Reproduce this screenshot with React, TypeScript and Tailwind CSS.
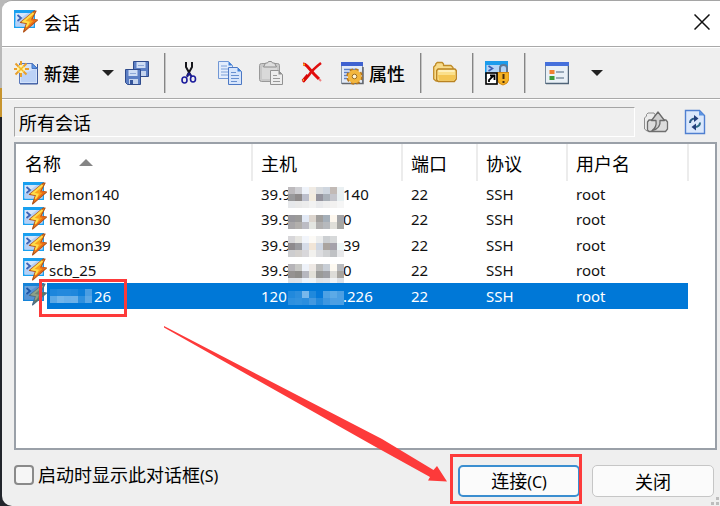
import React, { useState } from 'react';

interface Session {
  id: number;
  name: string;
  hostStart: string;
  hostEnd: string;
  port: string;
  protocol: string;
  user: string;
  mask: string[][];
  maskTop: string;
}

const sessions: Session[] = [
  {
    id: 1, name: 'lemon140', hostStart: '39.9', hostEnd: '140', port: '22', protocol: 'SSH', user: 'root', maskTop: 'top-1.5',
    mask: [
      ['#bdbabd', '#cfcfd3', '#eff3fa', '#f0ebe4', '#d9dcdf', '#cfd6df', '#c2bab6', '#eaf0f2'],
      ['#99999b', '#8f8b8b', '#bcbfcc', '#f3ecdf', '#94939d', '#a9b0b8', '#c4c5cc', '#e7eff1'],
      ['#e6e8eb', '#e9e9e9', '#ececec', '#f2f2f2', '#e9eaec', '#efefef', '#f2f1f0', '#f6f6f6'],
    ],
  },
  {
    id: 2, name: 'lemon30', hostStart: '39.9', hostEnd: '0', port: '22', protocol: 'SSH', user: 'root', maskTop: 'top-2',
    mask: [
      ['#98979c', '#9b9a99', '#e2e9f5', '#dcd5ce', '#a19f9d', '#a5afb9', '#fdf7ee', '#a4a5a8'],
      ['#a8a6a8', '#b2afac', '#bcbcc4', '#e3e5e1', '#b1b0b0', '#b6b9bd', '#e0dfd9', '#a6a6a3'],
    ],
  },
  {
    id: 3, name: 'lemon39', hostStart: '39.9', hostEnd: '39', port: '22', protocol: 'SSH', user: 'root', maskTop: 'top-1',
    mask: [
      ['#d7d6d9', '#e6e5e1', '#f2f5fb', '#fcfaf6', '#eceded', '#cccfd2', '#d7d9da', '#ffffff'],
      ['#8e8a8d', '#9b9b9f', '#d6dce8', '#f1e5d7', '#cfd7e3', '#aaa49f', '#a5a2ab', '#eef7f8'],
      ['#cdcdcf', '#d3d0cd', '#d8d7da', '#f2f1ee', '#dcdde0', '#cfd1d3', '#bfc1c4', '#e7e8ea'],
    ],
  },
  {
    id: 4, name: 'scb_25', hostStart: '39.9', hostEnd: '0', port: '22', protocol: 'SSH', user: 'root', maskTop: 'top-1.5',
    mask: [
      ['#b6b4b8', '#c8c8c5', '#eef2f9', '#eee9e5', '#bcbcbb', '#c8ced6', '#fdf9f1', '#b9bbbf'],
      ['#959291', '#8f8d8a', '#b6b7bf', '#e2e0d8', '#9a9a98', '#9e9fa4', '#dddcd8', '#a8a5a0'],
      ['#dfe2e6', '#e0e3e8', '#edf3fb', '#f0f3f5', '#e0e2e5', '#e1e4e9', '#f1f3f5', '#dde1e7'],
    ],
  },
  {
    id: 5, name: '26', hostStart: '120', hostEnd: '.226', port: '22', protocol: 'SSH', user: 'root', maskTop: 'top-2',
    mask: [
      ['#2189dc', '#2c8edd', '#77b8ec', '#2089dc', '#0679d9', '#4ea1e4', '#5caae7', '#4b9fe3'],
      ['#2d90df', '#3192df', '#2b8ede', '#4298e0', '#2389dc', '#3e97e1', '#4d9fe3', '#4b9fe4'],
    ],
  },
];

const nameMask = [
  ['#1c86dc', '#2289dd', '#2289dd', '#1f87dc', '#0f7fd9', '#4a9de2'],
  ['#5aa8e6', '#71b5ea', '#69b0e9', '#6cb1e9', '#2e90df', '#5ba7e5'],
];

const Mosaic = ({ cells }: { cells: string[][] }) => (
  <svg width={cells[0].length * 7} height={cells.length * 7} shapeRendering="crispEdges" aria-hidden="true">
    {cells.map((line, y) =>
      line.map((color, x) => <rect key={`${x}-${y}`} x={x * 7} y={y * 7} width="7" height="7" fill={color} />)
    )}
  </svg>
);

const SessionIcon = ({ selected = false }: { selected?: boolean }) => (
  <svg className="shrink-0" width="24" height="24" viewBox="0 0 24 24" aria-hidden="true">
    <rect x="0" y="0" width="21" height="18" fill={selected ? '#1583d8' : '#19a0f0'} />
    <rect x="1.500" y="3" width="18" height="13.500" fill={selected ? '#6ba3dc' : '#d5e6fb'} />
    <path d="M1.500 16.500V12L14 3h5.500v13.500z" fill={selected ? '#5592d4' : '#b5d0f5'} />
    <path d="M3.500 5l3.500 3-3.500 3" fill="none" stroke={selected ? '#1d55a8' : '#3d63b8'} strokeWidth="1.800" />
    <path d="M20.500 1L6.500 12.500l6 1L9.500 22 23.500 10l-5.500-1L22 1z" fill={selected ? '#6d8273' : '#f9a21c'} stroke={selected ? '#4d6f88' : '#b5541a'} strokeWidth="1.200" strokeLinejoin="round" />
    <path d="M19.500 3L9.500 11.500l5 1L12.500 17" fill="none" stroke={selected ? '#8fa287' : '#ffdc4a'} strokeWidth="2" />
    <path d="M12 19l9-8.500-4-1" fill="none" stroke={selected ? '#5f7560' : '#ea6a18'} strokeWidth="1.500" />
  </svg>
);

const NewIcon = () => (
  <svg width="24" height="24" viewBox="0 0 24 24" aria-hidden="true">
    <path d="M5.500 2.500H18l5.500 5v15h-18z" fill="#d3e2fa" stroke="#5a79bd" />
    <path d="M7 13l15-5v13H7z" fill="#bcd2f6" />
    <path d="M23.500 3v20H6" fill="none" stroke="#3d5a9c" />
    <path d="M18 2.500v5h5.500z" fill="#5b97e8" stroke="#4672bd" />
    <circle cx="7" cy="8" r="4" fill="#fff3a8" />
    <path d="M7 0v4M7 12v4M-1 8h4M11 8h4M1.500 2.500l3 3M12.500 2.500l-3 3M1.500 13.500l3-3M12.500 13.500l-3-3" stroke="#e9a02c" strokeWidth="2" />
    <path d="M4.500 5.500l5 5M9.500 5.500l-5 5" stroke="#f5b822" strokeWidth="1.500" />
  </svg>
);

const Floppy = () => (
  <>
    <path d="M.5.5h15v15h-13l-2-2z" fill="#5c7fc4" stroke="#2f4b8c" />
    <rect x="3.500" y="1" width="9" height="6" fill="#cfdef5" />
    <path d="M5 4.500h6" stroke="#8fa9d8" />
    <rect x="4" y="10" width="9" height="5" fill="#c6d5ee" />
    <rect x="5" y="11" width="3" height="4" fill="#35559b" />
  </>
);

const SaveAllIcon = () => (
  <svg width="24" height="24" viewBox="0 0 24 24" aria-hidden="true">
    <g transform="translate(8)"><Floppy /></g>
    <g transform="translate(0 8)"><Floppy /></g>
  </svg>
);

const CutIcon = () => (
  <svg width="24" height="24" viewBox="0 0 24 24" fill="none" aria-hidden="true">
    <path d="M9 1v5l5 9M15 1v5l-5 9" stroke="#17171c" strokeWidth="2" />
    <path d="M12 12l-2 4M12 12l3 4" stroke="#1c1c8c" strokeWidth="2" />
    <ellipse cx="7.500" cy="19" rx="2.500" ry="3" stroke="#1c1c9c" strokeWidth="1.600" />
    <ellipse cx="16" cy="18" rx="2.500" ry="3" stroke="#1c1c9c" strokeWidth="1.600" />
  </svg>
);

const CopyIcon = () => (
  <svg width="24" height="24" viewBox="0 0 24 24" aria-hidden="true">
    <path d="M.5.500h10l4 4v13H.5z" fill="#e3edfc" stroke="#7197d5" />
    <path d="M10.500.500v4h4z" fill="#3f80d8" />
    <path d="M3 5h6M3 8h8M3 11h8M3 14h8" stroke="#7ca0d8" />
    <path d="M10.500 6.500h9l4 4v13h-13z" fill="#d7e5fb" stroke="#4c78c4" />
    <path d="M19.500 6.500v4h4z" fill="#3f80d8" />
    <path d="M13 11.500h5M13 14.500h8M13 17.500h8M13 20.500h6" stroke="#6890d0" />
  </svg>
);

const PasteIcon = () => (
  <svg width="24" height="24" viewBox="0 0 24 24" aria-hidden="true">
    <rect x=".5" y="2.500" width="20" height="18" rx="2" fill="#c8c8c8" stroke="#999" />
    <rect x="3" y="6" width="15" height="12" fill="#d9d9d9" />
    <path d="M4.500 6l2-4h2l1-1.500h3l1 1.500h2l2 4z" fill="#dedede" stroke="#8c8c8c" />
    <path d="M11.500 9.500h8l4 4v10h-12z" fill="#ededed" stroke="#929292" />
    <path d="M19.500 9.500v4h4z" fill="#909090" />
    <path d="M14 14.500h4M14 17.500h7M14 20.500h7" stroke="#999" />
  </svg>
);

const DeleteIcon = () => (
  <svg width="24" height="24" viewBox="0 0 24 24" fill="none" aria-hidden="true">
    <path d="M3 3q2 0 4 2l7 8 5 5" stroke="#e30b0b" strokeWidth="3" />
    <path d="M21 2Q12 9 9 14l-6 7" stroke="#e01010" strokeWidth="2.500" />
    <path d="M3 20l5-6" stroke="#d80808" strokeWidth="3.500" />
    <path d="M19 18l2 2" stroke="#f08080" strokeWidth="2" />
    <path d="M3 3.500h2M3 19h1" stroke="#f6a51c" strokeWidth="2" />
  </svg>
);

const PropertiesIcon = () => (
  <svg width="24" height="24" viewBox="0 0 24 24" aria-hidden="true">
    <rect x=".5" y="1.500" width="21" height="21" fill="#e3ebf8" stroke="#8d99a8" />
    <rect x="0" y="1" width="22" height="4" fill="#3f62d0" />
    <path d="M3 8.500h12M3 11.500h7M3 14.500h4M3 17.500h3" stroke="#5c80c8" strokeWidth="1.500" />
    <path d="M1 22.500h21V6" fill="none" stroke="#63676e" strokeWidth="1.500" />
    <circle cx="13.500" cy="15.500" r="6.500" fill="none" stroke="#b9781c" strokeWidth="3.500" strokeDasharray="3.100 2" />
    <circle cx="13.500" cy="15.500" r="4.500" fill="none" stroke="#f3b63e" strokeWidth="4.500" />
    <circle cx="13.500" cy="15.500" r="2.300" fill="#fff4d5" stroke="#9b6b20" />
  </svg>
);

const FolderIcon = () => (
  <svg width="24" height="24" viewBox="0 0 24 24" aria-hidden="true">
    <path d="M.7 18V6l2-2V3l1.500-1.500h5L10.500 3v1.500H18l2 2V20H3z" fill="#f8dc8c" stroke="#c08c28" strokeWidth="1.300" strokeLinejoin="round" />
    <path d="M3.700 9.500L5 8h17l1.300 1.500V18l-2 2.500h-16L3.700 19z" fill="#fbe08b" stroke="#b98222" strokeWidth="1.300" strokeLinejoin="round" />
    <path d="M5 14h17v4l-1.500 1.500H6z" fill="#f4c654" />
    <path d="M5.500 10h16" stroke="#fff6cc" strokeWidth="1.500" />
  </svg>
);

const ShortcutIcon = () => (
  <svg width="24" height="26" viewBox="0 0 24 26" aria-hidden="true">
    <rect x="0" y="1" width="23" height="18" fill="#1c9cec" />
    <rect x="1.500" y="5" width="20" height="12" fill="#b4d4f6" />
    <path d="M3.500 6l4 2.500-4 2.500" fill="none" stroke="#3b5fb4" strokeWidth="1.600" />
    <path d="M15 14V8q0-3 3.500-3T22 8v6" fill="none" stroke="#607894" strokeWidth="2" />
    <path d="M12 12.500h12V19q-1 5-6 6-5-1-6-6z" fill="#f5b224" stroke="#d18713" />
    <path d="M18.500 14v5M18.500 21v2" stroke="#4b2f0c" strokeWidth="2" />
    <rect x="1" y="13" width="11" height="11" fill="#fff" stroke="#000" strokeWidth="1.600" />
    <path d="M4 22v-2l4-4M5 15.500h4.500V20" fill="none" stroke="#000" strokeWidth="1.800" />
  </svg>
);

const ViewIcon = () => (
  <svg width="24" height="24" viewBox="0 0 24 24" aria-hidden="true">
    <rect x=".5" y="1.500" width="23" height="21" fill="#e9f0f6" stroke="#75899c" />
    <rect x="0" y="1" width="24" height="4" fill="#4470dc" />
    <path d="M1 22.500h22.500V5" fill="none" stroke="#506478" strokeWidth="1.500" />
    <rect x="4.500" y="9" width="5" height="4" fill="#f08030" />
    <rect x="4.500" y="15" width="5" height="4" fill="#3a9a36" />
    <path d="M11 11h8M11 17h8" stroke="#7f91a5" strokeWidth="1.500" />
  </svg>
);

const UpIcon = () => (
  <svg width="26" height="24" viewBox="0 0 26 24" aria-hidden="true">
    <path d="M1.500 19V8l2-2V4.500L5 3h6l1 1.500V6h5l2 2v13H4z" fill="#ececec" stroke="#8d8d8d" strokeLinejoin="round" />
    <path d="M4.500 12L6 10h17l1.500 2v7l-2 2.500H6L4.500 20z" fill="#dcdcdc" stroke="#6f6f6f" strokeWidth="1.300" strokeLinejoin="round" />
    <path d="M9 20.500q5-3 4-10H8.500L15 2l6.500 8.500H17q1 8-8 10z" fill="#cfcfcf" stroke="#6a6a6a" strokeWidth="1.300" strokeLinejoin="round" />
  </svg>
);

const RefreshIcon = () => (
  <svg width="22" height="26" viewBox="0 0 22 26" aria-hidden="true">
    <path d="M1.500 1.500h14l5 5v18h-19z" fill="#dbe8fc" stroke="#4f7fd0" strokeWidth="1.400" />
    <path d="M15 1.500v5h5.500z" fill="#5b93e2" />
    <path d="M6 14q0-4 5-4.500" fill="none" stroke="#2b5a86" strokeWidth="2" />
    <path d="M10 6l4.500 3.500L10 13z" fill="#223f7c" />
    <path d="M16 13.500q0 4-5 4.500" fill="none" stroke="#2b6a86" strokeWidth="2" />
    <path d="M12 14.500L7.500 18l4.500 3.500z" fill="#223f7c" />
  </svg>
);

const Caret = () => (
  <svg width="12" height="6" viewBox="0 0 12 6" aria-hidden="true">
    <path d="M0 0h12L6 6z" fill="#222" />
  </svg>
);

const Separator = () => <span className="ml-[15px] mr-[11px] h-10 w-0.5 border-l border-[#858585] bg-[#c4c4c4]" />;

const Latin = ({ children }: { children: React.ReactNode }) => (
  <span className="font-['Noto_Sans',sans-serif] text-base">{children}</span>
);

export default function App() {
  const [showOnStart, setShowOnStart] = useState(false);
  const [selectedId, setSelectedId] = useState(5);

  return (
    <div className="min-h-screen bg-[linear-gradient(#b9b9b9_88px,#c8952f_88px,#c8952f_117px,#22252b_117px)] pl-0.5 font-['Noto_Sans_CJK_SC',sans-serif] text-lg leading-6 text-black">
      <div className="relative flex min-h-screen flex-col overflow-hidden rounded-l-[10px] border-t border-[#a5a5a5] bg-[#efefef]">
        <header className="flex h-[45px] items-center bg-white pb-1 pl-3 pr-2.5">
          <SessionIcon />
          <h1 className="ml-1.5 flex-1 font-normal">会话</h1>
          <button aria-label="关闭窗口">
            <svg width="16" height="16" viewBox="0 0 16 16" aria-hidden="true">
              <path d="M.5.500l15 15M15.500.500l-15 15" stroke="#111" strokeWidth="1.500" />
            </svg>
          </button>
        </header>

        <div className="flex h-[53px] items-center border-y border-[#a9a9a9] pl-3 font-medium shadow-[inset_0_1px_0_#fff,0_1px_0_#fff]">
          <button className="flex items-center gap-1.5"><NewIcon />新建</button>
          <button className="ml-[22px] mr-[11px]" aria-label="新建选项"><Caret /></button>
          <button aria-label="全部保存"><SaveAllIcon /></button>
          <Separator />
          <div className="flex items-center gap-[17px]">
            <button aria-label="剪切"><CutIcon /></button>
            <button aria-label="复制"><CopyIcon /></button>
            <button aria-label="粘贴"><PasteIcon /></button>
            <button aria-label="删除"><DeleteIcon /></button>
            <button className="flex items-center gap-1"><PropertiesIcon />属性</button>
          </div>
          <Separator />
          <button aria-label="新建文件夹"><FolderIcon /></button>
          <Separator />
          <button aria-label="创建快捷方式"><ShortcutIcon /></button>
          <Separator />
          <button className="ml-2" aria-label="查看"><ViewIcon /></button>
          <button className="ml-[22px]" aria-label="查看选项"><Caret /></button>
        </div>

        <div className="mt-2 flex h-[30px] items-center pl-3 pr-3.5">
          <div className="flex h-[30px] flex-1 items-center border border-b-white border-l-[#a5a5a5] border-r-white border-t-[#a5a5a5] pl-1">所有会话</div>
          <button className="ml-2" aria-label="向上"><UpIcon /></button>
          <button className="ml-[15px]" aria-label="刷新"><RefreshIcon /></button>
        </div>

        <main className="ml-3 mr-[3px] mt-[5px] flex-1 border-2 border-[#9aa0a8] bg-white">
          <table className="table-fixed border-collapse text-left">
            <colgroup>
              <col className="w-[236px]" />
              <col className="w-[150px]" />
              <col className="w-[75px]" />
              <col className="w-[90px]" />
              <col className="w-[121px]" />
            </colgroup>
            <thead>
              <tr className="h-[37px]">
                <th className="border-r-2 border-[#ececec] pl-[9px] font-normal">
                  <span className="flex items-center gap-[18px]">
                    名称
                    <svg width="14" height="7" viewBox="0 0 14 7" aria-hidden="true">
                      <path d="M0 7h14L7 0z" fill="#858585" />
                    </svg>
                  </span>
                </th>
                <th className="border-r-2 border-[#ececec] pl-2 font-normal">主机</th>
                <th className="border-r-2 border-[#ececec] pl-2 font-normal">端口</th>
                <th className="border-r-2 border-[#ececec] pl-2 font-normal">协议</th>
                <th className="border-r-2 border-[#ececec] pl-2 font-normal">用户名</th>
              </tr>
            </thead>
            <tbody className="font-['Noto_Sans',sans-serif] text-[15px] leading-[25px]">
              {sessions.map((session) => {
                const selected = session.id === selectedId;
                const fill = selected ? 'bg-[#0078d7] text-white' : 'text-[#111]';
                return (
                  <tr key={session.id} className="odd:h-[26px] even:h-[25px]" onClick={() => setSelectedId(session.id)}>
                    <td className="relative p-0">
                      <div className="flex pl-[7px]">
                        <SessionIcon selected={selected} />
                        {session.id === 5 ? (
                          <span className={`flex flex-1 items-center gap-0.5 pl-[3px] leading-[26px] ${fill}`}>
                            <Mosaic cells={nameMask} />
                            {session.name}
                          </span>
                        ) : (
                          <span className={`flex-1 pl-0.5 ${fill}`}>{session.name}</span>
                        )}
                      </div>
                      {session.id === 5 && (
                        <span className="absolute -top-1 left-[23px] h-[38px] w-[88px] border-3 border-[#fd3a3a]" />
                      )}
                    </td>
                    <td className={`relative py-0 pl-[9px] pr-0 ${fill}`}>
                      <div className="flex">
                        <span className="w-[82px]">{session.hostStart}</span>
                        <span>{session.hostEnd}</span>
                      </div>
                      <span className={`absolute left-9 leading-none ${session.maskTop}`}><Mosaic cells={session.mask} /></span>
                    </td>
                    <td className={`py-0 pl-[9px] pr-0 ${fill}`}>{session.port}</td>
                    <td className={`py-0 pl-[9px] pr-0 ${fill}`}>{session.protocol}</td>
                    <td className={`py-0 pl-[9px] pr-0 ${fill}`}>{session.user}</td>
                  </tr>
                );
              })}
            </tbody>
          </table>
        </main>

        <footer className="flex items-start justify-between pb-[9px] pl-3 pr-1.5 pt-[15px]">
          <label className="flex h-5 items-center gap-1">
            <input
              type="checkbox"
              className="size-5 appearance-none rounded border-2 border-[#8a8a8a] bg-[#f6f6f6] checked:bg-[#0078d7]"
              checked={showOnStart}
              onChange={(e) => setShowOnStart(e.target.checked)}
            />
            <span>启动时显示此对话框<Latin>(S)</Latin></span>
          </label>
          <div className="flex gap-3">
            <div className="relative">
              <button className="h-8 w-[122px] rounded-[5px] border-2 border-[#3b8ed0] bg-[#fbfbfb]">连接<Latin>(C)</Latin></button>
              <span className="pointer-events-none absolute -left-2 -right-0.5 -top-[11px] h-[50px] border-3 border-[#fd3a3a]" />
            </div>
            <button className="h-8 w-[122px] rounded-[5px] border border-[#c6c6c6] bg-[#fbfbfb]">关闭</button>
          </div>
        </footer>

        {/* pointer from the selected session to the connect button */}
        <svg className="pointer-events-none absolute left-[160px] top-[324px]" width="286" height="158" viewBox="0 0 286 158" aria-hidden="true">
          <path d="M2 1L220 114 271.500 145 275 141 285 156.500 266 155.500 268 152 212 121 2 2.500z" fill="#fd3a3a" />
        </svg>
        <svg className="absolute bottom-0 right-0" width="9" height="9" viewBox="0 0 9 9" aria-hidden="true">
          <path d="M5 0h3v3H5zM0 5h3v3H0zM5 5h3v3H5z" fill="#bdbdbd" />
        </svg>
      </div>
    </div>
  );
}
